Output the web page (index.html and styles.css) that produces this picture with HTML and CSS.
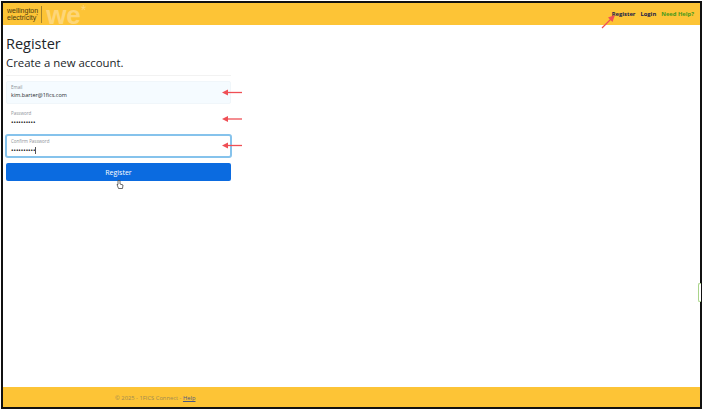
FILE: index.html
```html
<!DOCTYPE html>
<html lang="en">
<head>
<meta charset="utf-8">
<title>Register</title>
<link rel="stylesheet" href="styles.css">
</head>
<body>
<div class="frame">
  <header class="topbar">
    <div class="brand">
      <div class="brand-name">wellington<br>electricity<sup>*</sup></div>
      <div class="brand-we">we</div>
      <div class="brand-star">*</div>
    </div>
    <nav class="nav">
      <a class="nav-link">Register</a>
      <a class="nav-link">Login</a>
      <a class="nav-link nav-help">Need Help?</a>
    </nav>
  </header>
  <main class="content">
    <h1 class="title">Register</h1>
    <h2 class="subtitle">Create a new account.</h2>
    <hr class="rule">
    <form class="form">
      <div class="field field-filled"><span class="label">Email</span><span class="value">kim.barter@1fics.com</span></div>
      <div class="field"><span class="label">Password</span><span class="value dots">••••••••••</span></div>
      <div class="field field-focus"><span class="label">Confirm Password</span><span class="value dots">••••••••••<i class="caret"></i></span></div>
      <div class="button">Register</div>
    </form>
  </main>
  <footer class="footer">
    <span class="footer-text">© 2025 - 1FICS Connect - <a class="footer-link">Help</a></span>
  </footer>
  <div class="side-tab"></div>
  <svg class="overlay" width="704" height="412" viewBox="0 0 704 412">
    <g class="arrow">
      <path d="M602 28 L612 18"/><path class="head" d="M615 15 L608 17.5 L612.5 22 Z"/>
      <path d="M226 92.500 H242"/><path class="head" d="M222 92.500 L228 89.500 V95.500 Z"/>
      <path d="M226 119 H242"/><path class="head" d="M222 119 L228 116 V122 Z"/>
      <path d="M226 145.500 H242"/><path class="head" d="M222 145.500 L228 142.500 V148.500 Z"/>
    </g>
    <g class="cursor">
      <path d="M118 180.500 V184.500 L117 184.500 L118.500 188.500 H122.500 L123 185 L120 184 V180.500 Z"/>
    </g>
  </svg>
</div>
</body>
</html>
```

FILE: styles.css
```css
* { box-sizing: border-box; }
html, body { margin: 0; height: 100%; background: #fff; }
body { padding: 1px 2px 3px 1px; font-family: "Open Sans", "Liberation Sans", sans-serif; }
.frame {
  height: 408px;
  border: 2px solid #111;
  display: flex;
  flex-direction: column;
  background: #fff;
}
.topbar {
  height: 22px;
  background: #fdc436;
  display: flex;
  align-items: center;
  justify-content: space-between;
  padding: 0 6px 0 4px;
}
.brand { display: flex; align-items: center; height: 22px; }
.brand-name {
  font-family: "Liberation Sans", sans-serif;
  font-size: 7px;
  line-height: 7.500px;
  color: #4a3a10;
  padding-right: 3px;
  border-right: 1px solid #a8842a;
  height: 17px;
  padding-top: 1px;
}
.brand-name sup { font-size: 4px; line-height: 0; }
.brand-we {
  font-family: "Liberation Sans", sans-serif;
  font-weight: 700;
  font-size: 26px;
  line-height: 22px;
  color: #fdd679;
  margin: 1px 0 0 4px;
}
.brand-star {
  font-family: "Liberation Sans", sans-serif;
  font-size: 14px;
  line-height: 14px;
  color: #fdd679;
  align-self: flex-start;
}
.nav { display: flex; gap: 5px; font-size: 5.800px; font-weight: 700; margin-top: -1px; }
.nav-link { color: #17204a; }
.nav-help { color: #4a9a1c; }
.content { flex: 1; padding: 9px 0 0 3px; color: #212529; }
.title { margin: 0; font-size: 14.500px; line-height: 20px; font-weight: 400; }
.subtitle { margin: 0; font-size: 11.400px; line-height: 17px; font-weight: 500; }
.rule { width: 225px; margin: 4px 0 0; border: 0; border-top: 1px solid #f2f2f2; }
.form { width: 225px; margin-top: 5px; display: flex; flex-direction: column; }
.field {
  height: 23px;
  margin-bottom: 4px;
  padding: 2px 5px;
  border-radius: 2px;
  display: flex;
  flex-direction: column;
  background: #fff;
}
.field-filled { background: #f5fbff; border: 1px solid #f0f6fa; padding: 2px 4px; }
.field-focus {
  height: 24px;
  margin: -1px -1px 5px;
  border: 2px solid #86c3ec;
  border-radius: 3px;
  padding: 2px 4px;
}
.label { font-size: 4.500px; line-height: 7px; color: #8b9096; }
.value { font-size: 5.500px; line-height: 9px; color: #25292d; }
.dots { font-size: 6.500px; line-height: 11px; color: #222; }
.caret { display: inline-block; width: 1px; height: 7px; background: #555; vertical-align: -1px; }
.button {
  height: 18px;
  background: #0b6be0;
  color: #fff;
  border-radius: 2px;
  font-size: 7px;
  font-weight: 500;
  line-height: 19px;
  text-align: center;
}
.footer {
  height: 20px;
  background: #fdc436;
  display: flex;
  align-items: center;
  padding: 2px 0 0 112px;
}
.footer-text { font-size: 5.800px; color: #a08a52; }
.footer-link { color: #4d5a80; text-decoration: underline; }
.side-tab {
  position: absolute;
  left: 698px;
  top: 283px;
  width: 3px;
  height: 19px;
  border: 1px solid #a9d48a;
  border-right: 0;
  border-radius: 2px 0 0 2px;
  background: #fff;
}
.overlay { position: absolute; left: 0; top: 0; pointer-events: none; }
.arrow path { stroke: #ef4f55; stroke-width: 1.300; fill: none; }
.arrow .head { fill: #ef4f55; stroke: none; }
.cursor path { fill: #fff; stroke: #444; stroke-width: 0.800; }
```
